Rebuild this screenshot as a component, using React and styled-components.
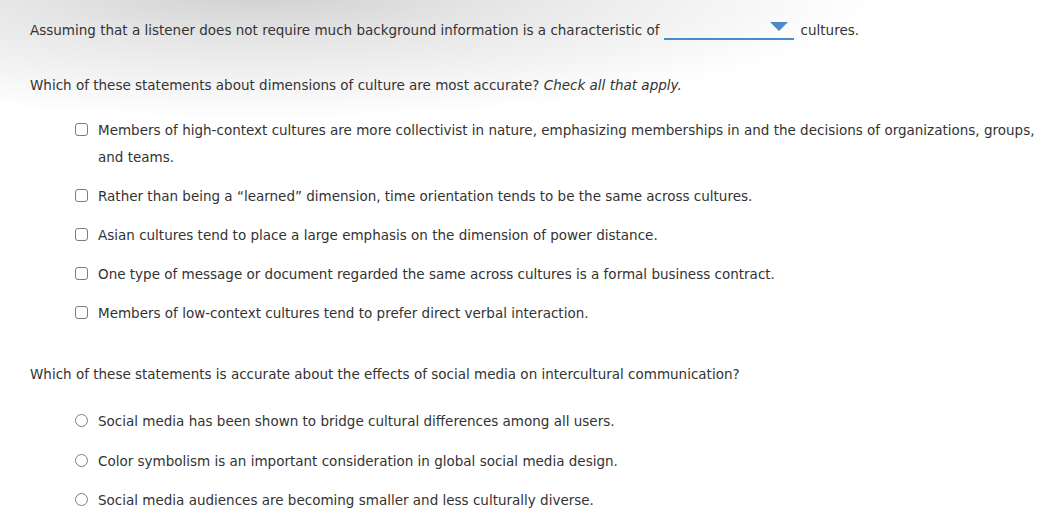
import React from "react";
import styled, { createGlobalStyle } from "styled-components";

const GlobalStyle = createGlobalStyle`
  html, body {
    margin: 0;
    padding: 0;
    background: #ffffff;
  }
  body {
    font-family: "DejaVu Sans", Verdana, sans-serif;
    font-size: 13.5px;
    color: #333333;
  }
`;

const checkItems = [
  "Members of high-context cultures are more collectivist in nature, emphasizing memberships in and the decisions of organizations, groups, and teams.",
  "Rather than being a \u201clearned\u201d dimension, time orientation tends to be the same across cultures.",
  "Asian cultures tend to place a large emphasis on the dimension of power distance.",
  "One type of message or document regarded the same across cultures is a formal business contract.",
  "Members of low-context cultures tend to prefer direct verbal interaction.",
];

const radioItems = [
  "Social media has been shown to bridge cultural differences among all users.",
  "Color symbolism is an important consideration in global social media design.",
  "Social media audiences are becoming smaller and less culturally diverse.",
];

const App = () => {
  return (
    <Page>
      <GlobalStyle />
      <Question>
        <span>Assuming that a listener does not require much background information is a characteristic of</span>
        <Dropdown>
          <Arrow />
        </Dropdown>
        <span>cultures.</span>
      </Question>

      <Prompt top={28}>
        Which of these statements about dimensions of culture are most accurate? <em>Check all that apply.</em>
      </Prompt>
      <OptionList gap={12} top={18}>
        {checkItems.map((text) => (
          <Option key={text}>
            <Checkbox />
            <OptionText>{text}</OptionText>
          </Option>
        ))}
      </OptionList>

      <Prompt top={34}>
        Which of these statements is accurate about the effects of social media on intercultural communication?
      </Prompt>
      <OptionList gap={12.5} top={20}>
        {radioItems.map((text) => (
          <Option key={text}>
            <Radio />
            <OptionText>{text}</OptionText>
          </Option>
        ))}
      </OptionList>
    </Page>
  );
};

export default App;

const Page = styled.div`
  position: relative;
  min-height: 527px;
  padding: 16px 0 0 30px;
  box-sizing: border-box;
  background:
    radial-gradient(ellipse 620px 130px at 260px -10px, #cfcfcf 0%, #e6e6e6 40%, rgba(255, 255, 255, 0) 100%),
    #ffffff;
`;

const Question = styled.div`
  display: flex;
  align-items: flex-end;
  line-height: 27px;
  white-space: nowrap;
`;

const Dropdown = styled.div`
  position: relative;
  width: 130px;
  height: 22px;
  margin: 0 7px 4px 4px;
  border-bottom: 2px solid #4a8ac9;
`;

const Arrow = styled.div`
  position: absolute;
  right: 6px;
  top: 6px;
  width: 0;
  height: 0;
  border-left: 9px solid transparent;
  border-right: 9px solid transparent;
  border-top: 9px solid #4a8ac9;
`;

const Prompt = styled.p`
  margin: ${(p) => p.top}px 0 0;
  line-height: 27px;

  em {
    font-style: italic;
  }
`;

const OptionList = styled.div`
  display: flex;
  flex-direction: column;
  gap: ${(p) => p.gap}px;
  margin-top: ${(p) => p.top}px;
  padding-left: 45px;
  padding-right: 10px;
`;

const Option = styled.label`
  display: flex;
  align-items: flex-start;
  gap: 10px;
  line-height: 27px;
`;

const OptionText = styled.span`
  flex: 1;
`;

const Checkbox = styled.span`
  flex: none;
  box-sizing: border-box;
  width: 13px;
  height: 13px;
  margin-top: 6px;
  border: 1px solid #7c7c7c;
  border-radius: 3px;
  background: #fff;
`;

const Radio = styled.span`
  flex: none;
  box-sizing: border-box;
  width: 13px;
  height: 13px;
  margin-top: 6px;
  border: 1px solid #7c7c7c;
  border-radius: 50%;
  background: #fff;
`;
